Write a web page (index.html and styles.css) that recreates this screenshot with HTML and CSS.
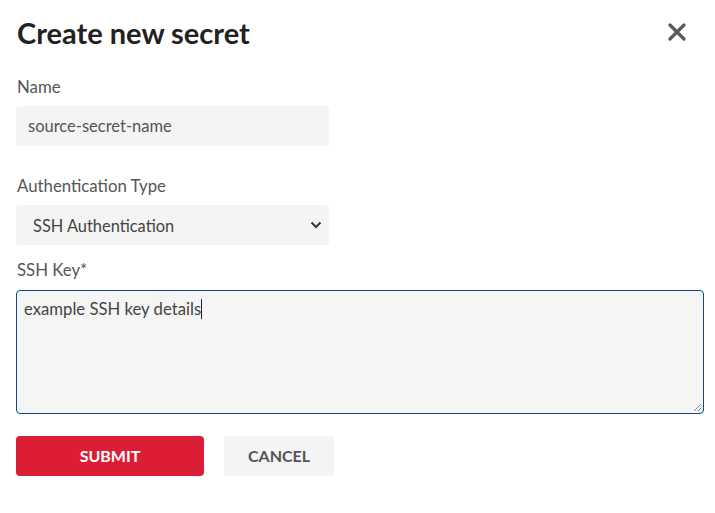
FILE: index.html
```html
<!DOCTYPE html>
<html>
<head>
<meta charset="utf-8">
<link rel="stylesheet" href="styles.css">
</head>
<body>
<div class="dialog">
  <div class="header">
    <h1 class="title">Create new secret</h1>
    <button class="close" aria-label="Close">
      <svg width="18" height="18" viewBox="0 0 18 18"><path d="M2 2 L16 16 M16 2 L2 16" stroke="#5a5a5a" stroke-width="3.2" stroke-linecap="round"/></svg>
    </button>
  </div>
  <div class="field">
    <label class="label">Name</label>
    <div class="input">source-secret-name</div>
  </div>
  <div class="field field-gap">
    <label class="label">Authentication Type</label>
    <div class="input select">
      <span>SSH Authentication</span>
      <svg width="12" height="8" viewBox="0 0 12 8"><path d="M1.5 1.5 L6 6 L10.5 1.5" fill="none" stroke="#333" stroke-width="2"/></svg>
    </div>
  </div>
  <div class="field">
    <label class="label">SSH Key*</label>
    <div class="textarea"><span>example SSH key details</span><span class="caret"></span>
      <svg class="grip" width="10" height="10" viewBox="0 0 10 10"><path d="M9 2 L2 9 M9 6 L6 9" stroke="#888" stroke-width="1"/></svg>
    </div>
  </div>
  <div class="actions">
    <button class="btn btn-primary">SUBMIT</button>
    <button class="btn btn-secondary">CANCEL</button>
  </div>
</div>
</body>
</html>
```
FILE: styles.css
```css
html, body { margin: 0; padding: 0; background: #fff; }
body { font-family: Lato, "Noto Sans", sans-serif; color: #555; }
.dialog { padding: 12px 11px 0 16px; }
.header { display: flex; justify-content: space-between; align-items: center; height: 40px; }
.title { margin: 0 0 0 1px; font-size: 29px; font-weight: 700; color: #222; letter-spacing: 0; }
.close { border: 0; background: none; padding: 0; margin-right: 17px; width: 20px; height: 20px; display: flex; align-items: center; justify-content: center; }
.field { display: flex; flex-direction: column; }
.label { font-size: 16.8px; color: #555; margin-top: 25px; margin-left: 1px; line-height: 20px; }
.field-gap .label { margin-top: 30px; }
.input { margin-top: 9px; width: 313px; height: 40px; box-sizing: border-box; background: #f4f4f4; border-radius: 4px; padding: 0 12px; display: flex; align-items: center; font-size: 16.5px; color: #555; }
.select { justify-content: space-between; padding: 0 7px 0 17px; color: #444; font-size: 16.4px; }
.field-gap + .field .label { margin-top: 15px; }
.textarea { position: relative; margin-top: 10px; height: 124px; box-sizing: border-box; border: 1px solid #0b4a96; border-radius: 4px; background: #f5f5f5; padding: 8px 7px; font-size: 16.7px; color: #444; line-height: 20px; }
.caret { display: inline-block; width: 1px; height: 20px; background: #222; vertical-align: top; }
.grip { position: absolute; right: 1px; bottom: 1px; }
.actions { display: flex; gap: 20px; margin-top: 22px; }
.btn { height: 40px; border: 0; border-radius: 4px; font-family: inherit; font-size: 16px; font-weight: 700; padding: 0 0 2px; }
.btn-primary { width: 188px; background: #dc1e35; color: #fff; }
.btn-secondary { width: 110px; background: #f4f4f4; color: #555; }
```
